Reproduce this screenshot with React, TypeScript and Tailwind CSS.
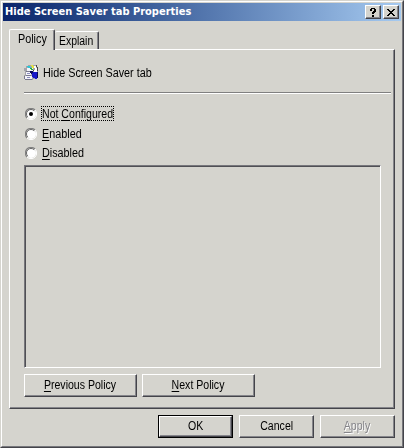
import type { ReactNode } from "react";

const raised =
  "border border-t-white border-l-white border-r-[#44444a] border-b-[#44444a] shadow-[inset_-1px_-1px_0_#85858a]";

function Label({ children, className = "origin-left scale-x-90" }: { children: ReactNode; className?: string }) {
  return (
    <span className={`block whitespace-pre text-[12px] leading-[14px] ${className}`}>
      {children}
    </span>
  );
}

function U({ children }: { children: ReactNode }) {
  return <span className="underline decoration-1 underline-offset-[2px]">{children}</span>;
}

function PolicyIcon() {
  return (
    <svg width="16" height="17" viewBox="0 0 16 17" shapeRendering="crispEdges" className="-mt-px">
      <path d="M2 2h2V1h8v1h1v3h1v9h-1v1H9v1H1v-1H0v-4h1V7H0V4h2z" fill="#a4a4aa" />
      <path d="M3 4h6v3H3zM2 8h5v3H2zM1 12h7v3H1z" fill="#f4f4fa" />
      <path d="M2 7h6v1H2zM2 11h5v1H2zM1 15h7v1H1zM0 12h1v3H0z" fill="#77778c" />
      <path d="M3 9h3v1H3zM3 13h3v1H3z" fill="#8c8cc0" />
      <path d="M3 2h3v1h1v1H4V3H3z" fill="#28c8d8" />
      <path d="M6 4h2v1h1v1H7V5H6z" fill="#28a838" />
      <path d="M7 1h2v1h1v2H8V2H7z" fill="#e8e838" />
      <path d="M10 2h2v2h1v4h-3V6h1V4h-1z" fill="#fff" />
      <path d="M12 1h1v2h-1zM13 3h1v4h-1zM9 6h1v1H9z" fill="#444" />
      <path d="M9 8h5v5h-1v2h-2v-1H9v-1H8V9h1z" fill="#1717c8" />
      <path d="M6 7h3v2H8v1H7V9H6zM13 8h1v6h-1z" fill="#08085c" />
    </svg>
  );
}

function Radio({ checked = false }: { checked?: boolean }) {
  return (
    <svg width="12" height="12" viewBox="0 0 12 12" className="shrink-0">
      <circle cx="6" cy="6" r="5" fill="#fff" />
      <path d="M2 10A5.5 5.5 0 0 1 10 2" fill="none" stroke="#808080" strokeWidth="1.1" />
      <path d="M2.8 9.2A4.5 4.5 0 0 1 9.2 2.8" fill="none" stroke="#666" strokeWidth="1" />
      <path d="M10 2A5.5 5.5 0 0 1 2 10" fill="none" stroke="#fff" strokeWidth="1" />
      {checked && <circle cx="6" cy="6" r="2" fill="#000" />}
    </svg>
  );
}

function Button({ children, className = "" }: { children: ReactNode; className?: string }) {
  return (
    <button className={`flex h-[23px] items-center justify-center ${raised} ${className}`}>
      <Label className="-mt-px origin-center scale-x-[0.88]">{children}</Label>
    </button>
  );
}

export default function App() {
  return (
    <div className="h-[448px] w-[404px] overflow-hidden border border-t-[#d5d4ce] border-l-[#d5d4ce] border-r-[#44444a] border-b-[#44444a] bg-[#d5d4ce] font-['Liberation_Sans',Arial,sans-serif] text-black">
      <div className="flex h-full flex-col border border-t-white border-l-white border-r-[#77777c] border-b-[#77777c] p-px">
        <header className="flex h-[18px] shrink-0 items-center justify-between bg-linear-to-r from-[#0a246a] to-[#a6caf0] pl-[2px] pr-[2px]">
          <h1 className="whitespace-nowrap font-['DejaVu_Sans_Condensed','DejaVu_Sans',sans-serif] text-[11px] font-bold leading-[18px] text-white">
            Hide Screen Saver tab Properties
          </h1>
          <div className="flex gap-[2px]">
            <button className={`flex h-[14px] w-4 items-center justify-center bg-[#d5d4ce] ${raised}`}>
              <svg width="8" height="9" viewBox="0 0 8 9" shapeRendering="crispEdges">
                <path d="M2 0h4v1h1v3H6v1H5v1H3V4h1V3h1V1H3v2H1V1h1zM3 7h2v2H3z" />
              </svg>
            </button>
            <button className={`flex h-[14px] w-4 items-center justify-center bg-[#d5d4ce] ${raised}`}>
              <svg width="8" height="7" viewBox="0 0 8 7" shapeRendering="crispEdges">
                <path d="M0 0h2v1h1v1h2V1h1V0h2v1H7v1H6v1H5v1h1v1h1v1h1v1H6V6H5V5H3v1H2v1H0V6h1V5h1V4h1V3H2V2H1V1H0z" />
              </svg>
            </button>
          </div>
        </header>

        <main className="flex flex-col pl-[6px] pr-[6px] pt-[8px]">
          <nav className="z-10 flex h-[20px] items-end">
            <div className="-mb-px h-[21px] w-[46px] rounded-t-[2px] border border-b-0 border-t-white border-l-white border-r-[#44444a] bg-[#d5d4ce] pl-[8px] pt-[2px] shadow-[inset_-1px_0_0_#85858a]">
              <Label>Policy</Label>
            </div>
            <div className="h-[18px] w-[44px] rounded-t-[2px] border border-b-0 border-l-0 border-t-white border-r-[#44444a] pl-[4px] pt-[2px] shadow-[inset_-1px_0_0_#85858a]">
              <Label className="origin-left scale-x-[0.87]">Explain</Label>
            </div>
          </nav>

          <section className={`flex h-[360px] w-[386px] flex-col pl-[14px] pt-[14px] ${raised}`}>
            <div className="flex h-[17px] items-center gap-[3px]">
              <PolicyIcon />
              <Label>Hide Screen Saver tab</Label>
            </div>
            <div className="mt-[11px] h-[2px] w-[367px] border-t border-b border-t-[#808080] border-b-white" />

            <div className="mt-[12px] flex flex-col">
              <label className="flex h-[15px] items-center pl-[1px]">
                <Radio checked />
                <span className="ml-[4px] h-[15px] w-[73px] border border-dotted border-black">
                  <Label className="origin-left scale-x-[0.88]">Not <U>C</U>onfigured</Label>
                </span>
              </label>
              <label className="mt-[5px] flex h-[15px] items-center gap-[5px] pl-[1px]">
                <Radio />
                <Label><U>E</U>nabled</Label>
              </label>
              <label className="mt-[4px] flex h-[15px] items-center gap-[5px] pl-[1px]">
                <Radio />
                <Label><U>D</U>isabled</Label>
              </label>
            </div>

            <div className="mt-[5px] h-[203px] w-[357px] border border-t-[#77777c] border-l-[#77777c] border-r-white border-b-white shadow-[inset_1px_1px_0_#505055]" />

            <div className="mt-[6px] flex gap-[5px]">
              <Button className="w-[113px]"><U>P</U>revious Policy</Button>
              <Button className="w-[113px]"><U>N</U>ext Policy</Button>
            </div>
          </section>

          <footer className="mt-[6px] flex justify-end gap-[6px]">
            <div className="flex h-[23px] w-[75px] border border-black">
              <Button className="h-[21px]! w-full">OK</Button>
            </div>
            <Button className="w-[75px]">Cancel</Button>
            <Button className="w-[75px] text-[#85858a] [text-shadow:1px_1px_0_white]"><U>A</U>pply</Button>
          </footer>
        </main>
      </div>
    </div>
  );
}
